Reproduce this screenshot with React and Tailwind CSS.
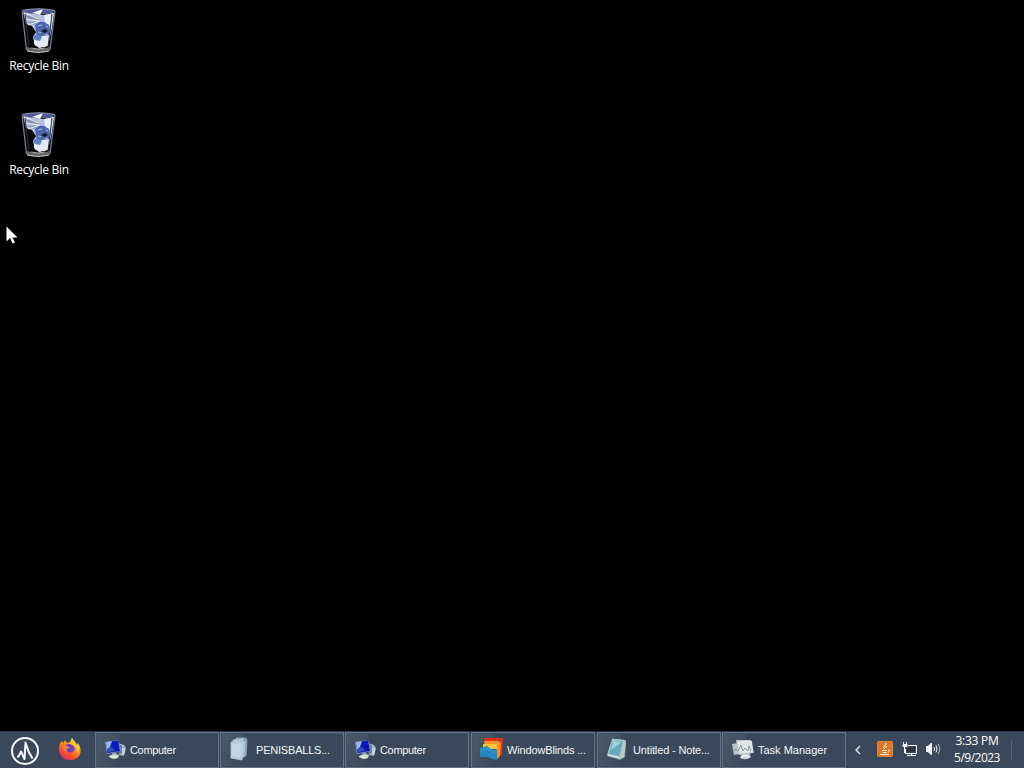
import React from 'react';

function RecycleBinIcon() {
  return (
    <svg width="38" height="46" viewBox="0 0 38 46" fill="none">
      <path d="M1.5 2 L6 43 Q18 48 30 43 L36 2Z" fill="#08090b" />
      <path d="M3 2 Q18 -1 35 2 L33 5 Q18 8 3 4Z" fill="#4d5c96" />
      <path d="M3 4 L14 6 L24 7 L34 5 L32 20 L29 33 L25 39 L15 38 L13 29 L16 24 L12 18 L6 16Z" fill="#b4c0df" />
      <path d="M12 5 L23 1 L20 7Z" fill="#f2f6ff" />
      <path d="M24 7 L34 5 L31 19 L25 14Z" fill="#edf1fc" />
      <path d="M5 7 L17 9 L20 12 L8 11Z M7 14 L18 13 L15 17Z" fill="#8290a8" />
      <path d="M4 5 L19 11 M6 11 L18 13 M8 17 L20 13" stroke="#dfe6f1" strokeWidth="1.1" />
      <path d="M15 18 Q17 13 24 14 L29 17 L30 26 L26 29 L17 28Z" fill="#4964ad" />
      <path d="M14 29 L22 28 L30 27 L28 38 L19 40 L14 36Z" fill="#e3ebfb" />
      <path d="M13 28 L18 26 L22 29 L20 33 L15 32Z" fill="#627fc6" />
      <path d="M18 18 L22 17 M26 18 L28 19 M18 24 L21 25 M25 27 L28 26" stroke="#8da1d6" strokeWidth="1.5" />
      <path d="M21 23 L25 21 L28 23 L25 25Z" fill="#10162c" />
      <path d="M2 3 L6.500 42 M35 3 L30 42" stroke="#777d86" strokeWidth="1.3" />
      <path d="M5 6 L9 40 M32 6 L28 39" stroke="#292d34" />
      <path d="M7 39 Q18 43 30 39 L29.500 43 Q18 47 7 43Z" fill="#67676b" />
      <path d="M7 43 Q18 46 29 43 M11 40 Q18 42 25 40" stroke="#b7b6b5" />
      <path d="M2 2.500 Q18 -1 35 2.500" stroke="#9aa4be" strokeWidth=".8" />
    </svg>
  );
}

function ComputerIcon() {
  return (
    <svg width="23" height="22" viewBox="0 0 23 22">
      <path d="M14 5 L20 7 L22 10 L20 18 L15 17Z" fill="#a4b1bf" />
      <path d="M15 6 L18 8 L18 15 L15 16Z" fill="#687c91" />
      <path d="M1 4 L14 2 L17 13 L3 16Z" fill="#8194c4" />
      <path d="M2 4 L14 2.500 L16 13 L3.500 15Z" fill="#0b19ba" />
      <path d="M2 4 L8 3 L6 9 L3 12Z" fill="#a1b6e5" />
      <path d="M3 11 L8 9 L11 13 L4 14Z" fill="#3453b0" />
      <path d="M8 15 L12 14 L13 18 L9 19Z" fill="#8ca0b4" />
      <path d="M5 18 Q10 15 15 17 L14 20 Q9 22 5 19Z" fill="#ccdde0" />
      <path d="M7 19 L13 18 L12 20 L9 20.500Z" fill="#eaf2c8" />
      <path d="M18 10 Q21 9 21 13 L20 17 L18 16Z" fill="#cbd5de" />
    </svg>
  );
}

function FilesIcon() {
  return (
    <svg width="23" height="24" viewBox="0 0 23 24">
      <path d="M7 1 L17 1 L18 3 L17 19 L6 20Z" fill="#8199af" stroke="#a7bacb" strokeWidth=".7" />
      <path d="M4 3 L14 2 L16 4 L15 20 L4 21Z" fill="#a7bed1" stroke="#c4d3df" strokeWidth=".7" />
      <path d="M2 5 L12 4 L14 6 L13 23 L2 21Z" fill="#b7cddd" stroke="#c2d2df" strokeWidth=".7" />
      <path d="M3 7 L11 6 L12 8 L11 20 L3 19Z" fill="#c2d5e3" />
      <path d="M14 3 L17 4 L16 18" fill="none" stroke="#8da8bc" />
    </svg>
  );
}

function BlindsIcon() {
  return (
    <svg width="24" height="24" viewBox="0 0 24 24">
      <path d="M4 1 L23 1 L22 17 L18 20 L18 8 L5 8Z" fill="#e9321e" />
      <path d="M4 4 L18 4 L21 6 L20 19 L17 22 L16 8 L5 9Z" fill="#f69526" />
      <path d="M3 7 L17 7 L17 12 L3 12Z" fill="#f4c637" />
      <path d="M0 11 L7 9 L11 12 L17 13 L17 23 L12 22 L8 20 L0 20Z" fill="#2685c4" />
      <path d="M1 12 L7 10 L11 13 L16 14 L16 16 L10 15 L6 13 L1 15Z" fill="#2e94cb" />
      <path d="M14 3 H16 M18 3 H20 M21 3 H22" stroke="#963224" strokeWidth="1.2" />
    </svg>
  );
}

function NoteIcon() {
  return (
    <svg width="23" height="23" viewBox="0 0 23 23">
      <path d="M6 1 L20 2 L19 19 L14 22 L1 18Z" fill="#819da3" />
      <path d="M6 1 L19 2 L15 20 L1 17Z" fill="#9cc7cf" />
      <path d="M6 3 L17 3 L13 18 L3 16Z" fill="#67a9b6" />
      <path d="M7 3 L16 4 L5 12Z" fill="#a3d1d7" />
      <path d="M18 3 L20 4 L18 19 L14 21Z" fill="#bfcac7" />
      <path d="M2 17 L14 20" stroke="#d4e6e6" strokeWidth="1.5" />
      <path d="M7 2 V.5 M10 2 V1 M13 2 V1 M16 3 V2" stroke="#c8d9dd" />
    </svg>
  );
}

function ManagerIcon() {
  return (
    <svg width="24" height="23" viewBox="0 0 24 23">
      <path d="M5 2 L20 2 L23 15 L8 17Z" fill="#bdcbd1" />
      <path d="M1 6 L14 4 L17 15 L3 17Z" fill="#b8c5cb" />
      <path d="M6 3 L21 3 L22 14 L8 16Z" fill="#dde5e5" />
      <path d="M2 14 L5 11 L7 13 L10 7 L12 13 L14 10 L17 13 L18 8 L20 13" fill="none" stroke="#87969b" />
      <path d="M11 16 L18 15 L20 19 Q15 23 9 20Z" fill="#c9d2d7" />
      <path d="M10 19 Q14 17 18 19" stroke="#edf3f3" fill="none" strokeWidth="1.5" />
    </svg>
  );
}

function StartIcon() {
  return (
    <svg width="30" height="30" viewBox="0 0 30 30" fill="none" stroke="#f5f8fb">
      <circle cx="15" cy="15" r="13" strokeWidth="2" />
      <path d="M7 20.500 L8.500 20.500 L11 15.500 L14.500 23 L15.500 6.500 L18.500 15.500 L22.500 22.500" strokeWidth="2" strokeLinejoin="round" />
    </svg>
  );
}

function FirefoxIcon() {
  return (
    <svg width="24" height="24" viewBox="0 0 24 24">
      <defs>
        <linearGradient id="flame" x1="19" y1="3" x2="6" y2="22" gradientUnits="userSpaceOnUse">
          <stop stopColor="#ffe34b" />
          <stop offset=".35" stopColor="#ff9d20" />
          <stop offset=".7" stopColor="#ff5429" />
          <stop offset="1" stopColor="#e12b68" />
        </linearGradient>
      </defs>
      <path d="M2 6 L4 4 L5 6 L7 3 L9 6 L12 5 L14 1 C15 4 18 5 19 8 L20 6 C26 15 21 23 12 23 C3 23 -1 15 2 6Z" fill="url(#flame)" />
      <path d="M14 1 Q12 6 17 9 Q21 12 18 16 L21 14 L20 7 L19 9 L17 5Z" fill="#ffd03c" />
      <path d="M8 8 Q11 6 14 8 Q18 10 16 14 Q12 18 8 14 L7 12Z" fill="#6940bd" />
      <path d="M3 8 L9 9 L12 11 L8 12 L10 15 Q8 15 6 13Z" fill="#fd8731" />
      <path d="M8 14 Q13 17 17 12 Q16 17 11 17Z" fill="#d55065" />
    </svg>
  );
}

function TaskButton({ icon, title, titleClass }) {
  return (
    <button className="relative box-border flex h-[36px] w-[124px] shrink-0 items-center overflow-hidden border border-[#647587] bg-[#39495b] text-left shadow-[inset_1px_1px_0_#435365]">
      <span className="absolute top-px left-px h-[32px] w-[22px] bg-gradient-to-br from-[#4c5b6a] to-[#39495b]" />
      <span className="relative ml-[8px] flex w-[26px] shrink-0 pb-[2px]">{icon}</span>
      <span className={`relative whitespace-nowrap font-['Liberation_Sans',sans-serif] text-[11px] leading-[16px] text-[#f4f7f9] ${titleClass}`}>{title}</span>
    </button>
  );
}

function DesktopIcon() {
  return (
    <div className="flex h-[104px] w-[78px] flex-col items-center pt-[8px]">
      <RecycleBinIcon />
      <span className="mt-[4px] whitespace-nowrap font-['Open_Sans',sans-serif] text-[12px] leading-[16px] tracking-[-0.28px] text-white">Recycle Bin</span>
    </div>
  );
}

export default function App() {
  return (
    <div className="relative flex h-[768px] w-[1024px] flex-col overflow-hidden bg-black">
      <main className="flex-1">
        <DesktopIcon />
        <DesktopIcon />
      </main>
      <svg className="absolute top-[226px] left-[6px]" width="12" height="19" viewBox="0 0 12 19">
        <path d="M.5 .5 V15.500 L4 12 L6.500 17.500 L9 16.500 L6.500 11.500 H11.500Z" fill="white" />
      </svg>
      <footer className="flex h-[37px] shrink-0 items-center border-t border-[#28343f] bg-[#39495b]">
        <div className="flex w-[95px] shrink-0 items-center pt-px">
          <div className="ml-[10px]"><StartIcon /></div>
          <div className="ml-[18px] pb-[4px]"><FirefoxIcon /></div>
        </div>
        <div className="flex w-[751px] shrink-0 gap-px">
          <TaskButton icon={<ComputerIcon />} title="Computer" titleClass="tracking-[-0.32px]" />
          <TaskButton icon={<FilesIcon />} title="PENISBALLS..." titleClass="pl-px tracking-[-0.2px]" />
          <div className="mr-px flex">
            <TaskButton icon={<ComputerIcon />} title="Computer" titleClass="tracking-[-0.32px]" />
          </div>
          <div className="mr-px flex">
            <TaskButton icon={<BlindsIcon />} title="WindowBlinds ..." titleClass="pl-px tracking-[-0.15px]" />
          </div>
          <TaskButton icon={<NoteIcon />} title="Untitled - Note..." titleClass="pl-px tracking-[-0.15px]" />
          <TaskButton icon={<ManagerIcon />} title="Task Manager" titleClass="pl-px tracking-[0px]" />
        </div>
        <div className="flex h-full flex-1 items-center text-white">
          <svg className="ml-[8px]" width="8" height="10" viewBox="0 0 8 10" fill="none">
            <path d="M6 1 L2 5 L6 9" stroke="#edf2f5" strokeWidth="1.3" />
          </svg>
          <div className="ml-[15px] flex items-center pb-[2px]">
            <svg width="16" height="16" viewBox="0 0 16 16" fill="none">
              <rect x=".5" y=".5" width="15" height="15" rx="1" fill="#db7828" stroke="#df8639" />
              <path d="M9 2 Q10 4 7 5 Q6 7 8 8 M10 5 L8.500 7 M5 9.500 H10 M5.500 11.500 H10 M3 13.500 H12 M11 9 Q14 9 11 11.500" stroke="#ffefd5" />
            </svg>
            <svg className="ml-[8px]" width="17" height="16" viewBox="0 0 17 16" fill="none" stroke="#f6fafc">
              <path d="M7 4.500 H15.500 V12.500 H4.500 V8 M10.500 13 V14 M6 14.500 H15" />
              <path d="M2.500 1 V3 M5.500 1 V3 M3.500 6 V12" />
              <path d="M2 3.500 H6 V5.500 H2Z" fill="#dce4e9" />
              <path d="M7.500 6 H14 V11 H6 V7.500Z" fill="#2a3743" stroke="none" />
            </svg>
            <svg className="ml-[7px]" width="16" height="16" viewBox="0 0 16 16" fill="none" stroke="#f8fafb">
              <path d="M1.500 5.500 H3 L6.500 2 V14 L3 10.500 H1.500Z" fill="#f8fafb" />
              <path d="M9 6 Q10 8 9 10 M11 4.500 Q13 8 11 11.500" />
              <path d="M13 3 Q16.500 8 13 13" stroke="#a9b7c3" />
            </svg>
          </div>
          <div className="ml-[9px] flex w-[54px] flex-col items-center whitespace-nowrap pb-[2px] font-['Open_Sans',sans-serif] text-[12px] leading-[17px]">
            <span className="tracking-[-0.25px]">3:33 PM</span>
            <span className="tracking-[-0.5px]">5/9/2023</span>
          </div>
          <div className="ml-[7px] h-[20px] w-px bg-[#536477]" />
        </div>
      </footer>
    </div>
  );
}
